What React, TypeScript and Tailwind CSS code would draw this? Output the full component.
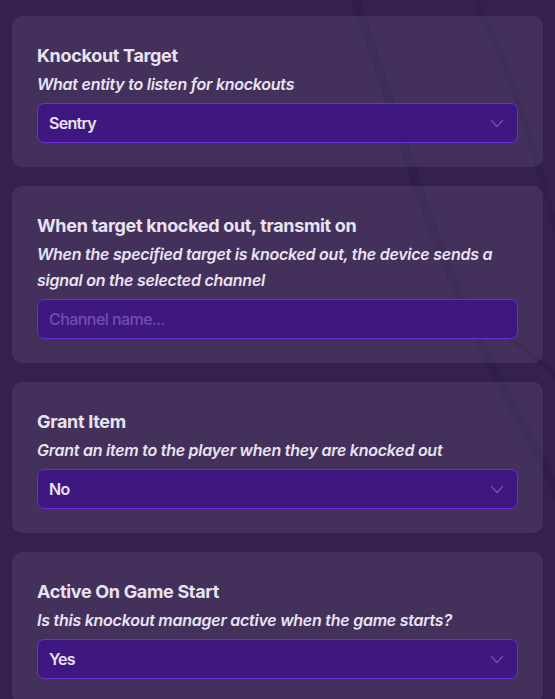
import React from 'react';

type Field = {
  title: string;
  hint: string;
  kind: 'select' | 'input';
  value: string;
};

const fields: Field[] = [
  { title: 'Knockout Target', hint: 'What entity to listen for knockouts', kind: 'select', value: 'Sentry' },
  {
    title: 'When target knocked out, transmit on',
    hint: 'When the specified target is knocked out, the device sends a signal on the selected channel',
    kind: 'input',
    value: 'Channel name...',
  },
  { title: 'Grant Item', hint: 'Grant an item to the player when they are knocked out', kind: 'select', value: 'No' },
  { title: 'Active On Game Start', hint: 'Is this knockout manager active when the game starts?', kind: 'select', value: 'Yes' },
];

function Chevron() {
  return (
    <svg width="14" height="9" viewBox="0 0 14 9" fill="none" className="shrink-0">
      <path d="M1 1l6 6.5L13 1" stroke="#7353ad" strokeWidth="1.2" />
    </svg>
  );
}

function Card({ f }: { f: Field }) {
  return (
    <div className="rounded-[10px] bg-white/[0.07] px-[25px] pt-[26px] pb-[24px]">
      <div className="text-[18px] font-bold leading-[28px] tracking-[-0.018em] text-[#e9e3f1]">{f.title}</div>
      <div className="mt-[1px] text-[16px] italic font-semibold leading-[26px] tracking-[-0.016em] text-[#e9e3f1]">{f.hint}</div>
      <div className="mt-[6px] flex h-[40px] items-center justify-between rounded-[7px] border border-[#6a2fd6] bg-[#3e1880] pl-[11px] pr-[13px]">
        <span
          className={
            f.kind === 'input'
              ? 'text-[16px] font-medium tracking-[-0.035em] text-[#6f4faf]'
              : 'text-[16px] font-semibold tracking-[-0.045em] text-[#e9e3f1]'
          }
        >
          {f.value}
        </span>
        {f.kind === 'select' && <Chevron />}
      </div>
    </div>
  );
}

export default function App() {
  return (
    <div
      className="relative h-[699px] w-[555px] overflow-hidden bg-[#35214f]"
      style={{ fontFamily: 'Inter, "Noto Sans", sans-serif' }}
    >
      {/* faint background streaks */}
      <svg className="absolute inset-0" width="555" height="699" viewBox="0 0 555 699" fill="none">
        <path d="M355 0 C 400 120, 430 260, 520 420 S 555 560, 560 600" stroke="#2a1843" strokeWidth="9" opacity="0.45" />
        <path d="M470 -10 C 520 80, 540 180, 560 240" stroke="#2c1946" strokeWidth="6" opacity="0.35" />
        <path d="M470 320 C 510 335, 540 360, 560 380" stroke="#2c1946" strokeWidth="5" opacity="0.4" />
      </svg>
      <div className="relative flex flex-col gap-[19px] px-[12px] pt-[16px]">
        {fields.map((f) => (
          <Card key={f.title} f={f} />
        ))}
      </div>
    </div>
  );
}
